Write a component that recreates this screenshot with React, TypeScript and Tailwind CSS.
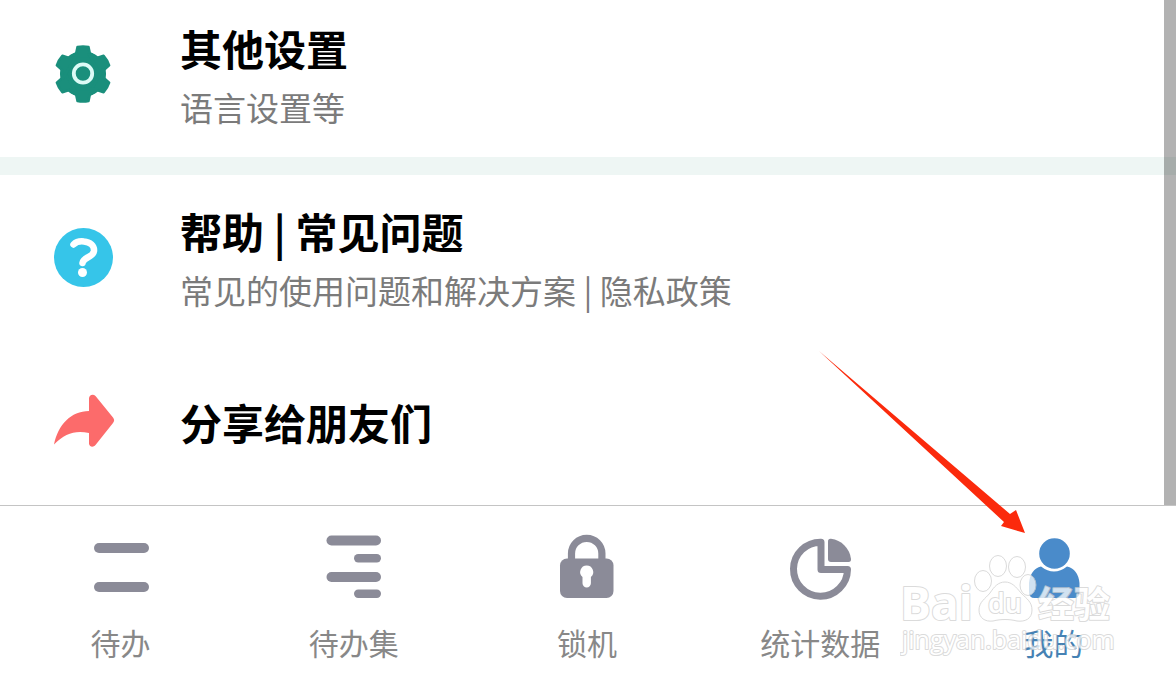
import type { ReactNode } from 'react';

interface SettingItem {
  title: string;
  subtitle?: string;
  icon: ReactNode;
  className: string;
}

interface TabItem {
  label: string;
  icon: ReactNode;
  active?: boolean;
}

function GearIcon() {
  return (
    <svg viewBox="0 0 60 60" aria-hidden="true" className="size-[60px] text-[#1a8f7c]">
      <circle cx="30" cy="30" r="23" fill="currentColor" />
      {[0, 60, 120, 180, 240, 300].map((angle) => (
        <path
          key={angle}
          d="M24.5 3Q30 1.8 35.5 3L37 10Q41 11 44 15L16 15Q19 11 23 10Z"
          fill="currentColor"
          stroke="currentColor"
          strokeWidth="2.5"
          strokeLinejoin="round"
          transform={`rotate(${angle} 30 30)`}
        />
      ))}
      <circle cx="30" cy="29.5" r="9.2" fill="none" stroke="#dcfbf6" strokeWidth="3.8" />
    </svg>
  );
}

function HelpIcon() {
  return (
    <svg viewBox="0 0 60 60" aria-hidden="true" className="size-[60px]">
      <circle cx="30.5" cy="30.5" r="29.5" fill="#36c5e9" />
      <path
        d="M20.5 17.5C23.5 14.5 27 14 31 14.5C37 15 41.5 18.5 41 24C40 31 30.5 29.5 29.5 36"
        fill="none"
        stroke="#fff"
        strokeWidth="6.5"
        strokeLinecap="round"
      />
      <circle cx="29.5" cy="45.5" r="4.5" fill="#fff" />
    </svg>
  );
}

function ShareIcon() {
  return (
    <svg viewBox="0 -3 60 60" aria-hidden="true" className="size-[60px] overflow-visible">
      <path
        d="M36 16V3.5C36 0 40 -1.5 42.5 1L60 22.5C61.5 24.5 61.5 26 60 28L42.5 50C40 53 36 51.5 36 48.5V38C22 35 12 38.5 1 49.5C5 30 18 16 36 16Z"
        fill="#fc6b6b"
      />
    </svg>
  );
}

function TodoIcon() {
  return (
    <svg viewBox="0 0 64 64" aria-hidden="true" className="size-16" fill="currentColor">
      <rect x="5" y="9" width="55" height="10" rx="5" />
      <rect x="5" y="48" width="55" height="10" rx="5" />
    </svg>
  );
}

function TodoSetIcon() {
  return (
    <svg viewBox="0 0 64 64" aria-hidden="true" className="size-16" fill="currentColor">
      <rect x="4.5" y="1.5" width="54.5" height="10" rx="5" />
      <rect x="32" y="20" width="27" height="8.5" rx="4.2" />
      <rect x="4.5" y="38" width="54.5" height="10" rx="5" />
      <rect x="32" y="55.5" width="27" height="8.5" rx="4.2" />
    </svg>
  );
}

function LockIcon() {
  return (
    <svg viewBox="0 0 64 64" aria-hidden="true" className="size-16">
      <path d="M16.5 26V19.5a15.2 15.2 0 0 1 30.4 0V26" fill="none" stroke="currentColor" strokeWidth="7.2" />
      <rect x="5" y="24.5" width="53.5" height="39.5" rx="7" fill="currentColor" />
      <path
        d="M31.7 31.5a6.6 6.6 0 0 1 4.2 11.6v6.2a4.2 4.2 0 0 1-8.4 0v-6.2a6.6 6.6 0 0 1 4.2-11.6Z"
        fill="#fff"
      />
    </svg>
  );
}

function PieIcon() {
  return (
    <svg viewBox="0 0 64 64" aria-hidden="true" className="size-16 overflow-visible">
      <path
        d="M33 35.5V8.2A27 27 0 1 0 59.5 35.5Z"
        fill="none"
        stroke="currentColor"
        strokeWidth="7"
        strokeLinejoin="round"
      />
      <path d="M43 4.8A23 23 0 0 1 63 25Q63.3 28 60.5 28H43Q40 28 40 25V7.5Q40 4.5 43 4.8Z" fill="currentColor" />
    </svg>
  );
}

function UserIcon() {
  return (
    <svg viewBox="0 0 64 64" aria-hidden="true" className="size-16" fill="currentColor">
      <circle cx="33.5" cy="19.5" r="15.3" />
      <path d="M20 32.5Q33 42.5 46 32.5Q57 35 58.5 49V58Q58.5 64 53 64H13.5Q8 64 8 58V49Q9.5 35 20 32.5Z" />
    </svg>
  );
}

const settings: SettingItem[] = [
  { title: '其他设置', subtitle: '语言设置等', icon: <GearIcon />, className: 'border-b-[18px] border-[#eef6f4] pt-[18px] pb-[21px]' },
  { title: '帮助 | 常见问题', subtitle: '常见的使用问题和解决方案 | 隐私政策', icon: <HelpIcon />, className: 'pt-[26px] pb-10' },
  { title: '分享给朋友们', icon: <ShareIcon />, className: 'pt-[33px] pb-[53px]' },
];

const tabs: TabItem[] = [
  { label: '待办', icon: <TodoIcon /> },
  { label: '待办集', icon: <TodoSetIcon /> },
  { label: '锁机', icon: <LockIcon /> },
  { label: '统计数据', icon: <PieIcon /> },
  { label: '我的', icon: <UserIcon />, active: true },
];

function SettingRow({ title, subtitle, icon, className }: SettingItem) {
  return (
    <li className={className}>
      <a href="#" className="flex items-start gap-[67px] pl-[53px]">
        <span className={subtitle ? 'shrink-0 pt-[26px]' : 'shrink-0'}>{icon}</span>
        <span className="min-w-0">
          <span className="block text-[42px] leading-[60px] font-bold text-black">{title}</span>
          {subtitle && <span className="block text-[33px] leading-[58px] text-[#7b7b7b]">{subtitle}</span>}
        </span>
      </a>
    </li>
  );
}

function PointerArrow() {
  return (
    <svg
      viewBox="0 0 206 182"
      aria-hidden="true"
      className="pointer-events-none absolute right-[151px] bottom-[148px] h-[182px] w-[206px]"
    >
      <path d="M0 0L191 163L197 159L206 182L182 175L185 171Z" fill="#fb2a0c" />
    </svg>
  );
}

function Watermark() {
  return (
    <svg
      viewBox="0 0 216 106"
      className="pointer-events-none absolute right-[60px] bottom-[22px] h-[106px] w-[216px] opacity-75"
      fill="#fff"
      stroke="#cfcfcf"
      strokeWidth="1"
    >
      <ellipse cx="83" cy="28" rx="8.5" ry="10.5" />
      <ellipse cx="98" cy="13" rx="8.5" ry="10.5" />
      <ellipse cx="117" cy="14" rx="8.5" ry="10.5" />
      <ellipse cx="128" cy="32" rx="8" ry="10.5" />
      <path d="M105 29C112 29 116 34 121 40C127 46 132 49 132 57C132 66 125 69 117 68C109 66 101 66 93 68C85 69 79 65 79 57C79 49 85 46 90 40C94 34 98 29 105 29Z" />
      <g strokeWidth="2" strokeLinejoin="round" className="[paint-order:stroke]">
        <text x="0" y="67" className="font-['Open_Sans',sans-serif] text-[46px] font-bold">Bai</text>
        <text x="88" y="60" className="font-['Open_Sans',sans-serif] text-[27px] font-semibold">du</text>
        <text x="138" y="65" className="font-['Noto_Sans_CJK_SC',sans-serif] text-[36px] font-bold">经验</text>
        <text x="2" y="96" className="font-['Open_Sans',sans-serif] text-[25px]">jingyan.baidu.com</text>
      </g>
    </svg>
  );
}

export default function App() {
  return (
    <div className="flex min-h-screen flex-col bg-white font-['Noto_Sans_CJK_SC',sans-serif]">
      <main className="relative flex-1">
        <ul>
          {settings.map((item) => (
            <SettingRow key={item.title} {...item} />
          ))}
        </ul>
        <div className="absolute inset-y-0 right-0 w-3 bg-black/30" />
      </main>

      <nav className="relative flex border-t border-[#c4c4c4] pt-7 pr-1.5 pb-[17px] pl-1">
        {tabs.map((tab) => (
          <button
            key={tab.label}
            type="button"
            aria-current={tab.active ? 'page' : undefined}
            className="flex flex-1 basis-0 flex-col items-center gap-[22px]"
          >
            <span className={tab.active ? 'text-[#4a8bca]' : 'text-[#8b8b98]'}>{tab.icon}</span>
            <span className={tab.active ? 'text-[30px] leading-[44px] text-[#4682b4]' : 'text-[30px] leading-[44px] text-[#888888]'}>
              {tab.label}
            </span>
          </button>
        ))}
        <Watermark />
        <PointerArrow />
      </nav>
    </div>
  );
}
